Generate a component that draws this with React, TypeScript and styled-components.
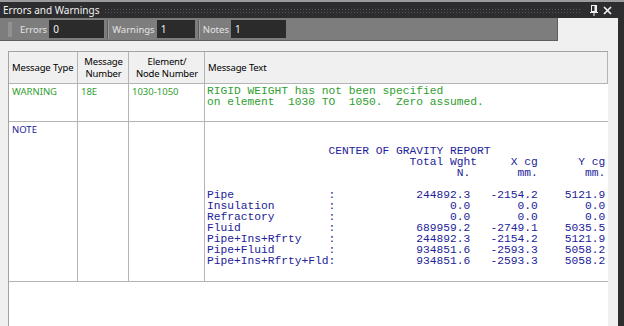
import React from "react";
import styled, { createGlobalStyle } from "styled-components";

const GlobalStyle = createGlobalStyle`
  html, body { margin: 0; padding: 0; background: #f0f0f0; }
  body { font-family: "Noto Sans", "Liberation Sans", sans-serif; }
  #root { width: 624px; height: 326px; }
`;

const Window = styled.div`
  width: 624px;
  height: 326px;
  display: flex;
  flex-direction: column;
  overflow: hidden;
  background: #2d2d30;
`;

const TopStrip = styled.div`
  height: 2px;
  flex: none;
  background: #9b9b9b;
`;

const TitleBar = styled.div`
  height: 16px;
  flex: none;
  display: flex;
  align-items: center;
  background: #2d2d30;
  color: #f1f1f1;
  padding: 0 12px 0 3px;
  font-size: 10px;
`;

const TitleText = styled.span`
  white-space: nowrap;
  line-height: 16px;
`;

const Dots = styled.div`
  flex: 1;
  height: 5px;
  margin: 0 5px 0 5px;
  background-image: radial-gradient(circle, #56565a 0.7px, transparent 0.9px);
  background-size: 3px 3px;
`;

const TitleButton = styled.span`
  display: flex;
  align-items: center;
  justify-content: center;
  width: 9px;
  height: 12px;
  margin-left: 4px;
`;

const Body = styled.div`
  flex: 1;
  display: flex;
  min-height: 0;
`;

const Main = styled.div`
  flex: 1;
  display: flex;
  flex-direction: column;
  background: #f0f0f0;
  min-width: 0;
`;

const RightEdge = styled.div`
  width: 6px;
  flex: none;
  background: #2d2d30;
`;

const Toolbar = styled.div`
  width: 558px;
  height: 23px;
  flex: none;
  box-sizing: border-box;
  background: #7d7d7d;
  border-right: 1px solid #5e5e5e;
  border-bottom: 1px solid #5e5e5e;
  display: flex;
  align-items: center;
  padding-left: 8px;
`;

const Grip = styled.div`
  width: 4px;
  height: 15px;
  background-image: radial-gradient(circle, #a9a9a9 0.6px, transparent 0.8px);
  background-size: 2px 2px;
  margin-right: 8px;
`;

const Group = styled.div`
  display: flex;
  align-items: center;
  gap: 2px;
`;

const Label = styled.span`
  font-size: 9.5px;
  color: #e4e4e4;
  white-space: nowrap;
`;

const Count = styled.div<{ $w: number }>`
  width: ${(p) => p.$w}px;
  height: 18px;
  box-sizing: border-box;
  background: #2b2b2c;
  color: #f1f1f1;
  font-size: 10px;
  padding-left: 4px;
  display: flex;
  align-items: center;
`;

const Sep = styled.div`
  width: 1px;
  height: 19px;
  background: #5a5a5a;
  border-right: 1px solid #9c9c9c;
  margin: 0 3px 0 3px;
`;

const Content = styled.div`
  flex: 1;
  display: flex;
  flex-direction: column;
  padding: 10px 10px 0 8px;
  min-height: 0;
`;

const Table = styled.div`
  flex: 1;
  display: flex;
  flex-direction: column;
  background: #ffffff;
  border-top: 1px solid #a3a3a3;
  border-left: 1px solid #a3a3a3;
  overflow: hidden;
`;

const Row = styled.div<{ $h: number }>`
  display: grid;
  grid-template-columns: 69px 51px 76px 1fr;
  height: ${(p) => p.$h}px;
  flex: none;
`;

const HeadCell = styled.div<{ $center?: boolean }>`
  box-sizing: border-box;
  background: #f0f0f0;
  border-right: 1px solid #b4b4b4;
  border-bottom: 1px solid #b4b4b4;
  display: flex;
  align-items: center;
  justify-content: ${(p) => (p.$center ? "center" : "flex-start")};
  text-align: ${(p) => (p.$center ? "center" : "left")};
  padding: 0 2px 0 3px;
  font-size: 9.5px;
  letter-spacing: -0.15px;
  line-height: 12px;
  white-space: nowrap;
  color: #000;
`;

const Cell = styled.div<{ $color: string }>`
  box-sizing: border-box;
  border-right: 1px solid #b4b4b4;
  border-bottom: 1px solid #b4b4b4;
  padding: 2px 3px;
  font-size: 9.5px;
  line-height: 11px;
  color: ${(p) => p.$color};
  overflow: hidden;
`;

const TextCell = styled.div<{ $color: string }>`
  box-sizing: border-box;
  border-bottom: 1px solid #b4b4b4;
  padding: 2px 2px;
  overflow: hidden;
  color: ${(p) => p.$color};
`;

const Mono = styled.pre`
  margin: 0;
  font-family: "Liberation Mono", "Courier New", monospace;
  font-size: 11.25px;
  line-height: 11px;
  white-space: pre;
`;

const Filler = styled.div`
  flex: 1;
  background: #ffffff;
`;

const GREEN = "#2f9e2f";
const BLUE = "#22229a";

const sp = (n: number) => " ".repeat(n);
const dataLine = (label: string, w: string, x: string, y: string) =>
  label.padEnd(18) + ":" + w.padStart(20) + x.padStart(10) + y.padStart(10);

const warningText = [
  "RIGID WEIGHT has not been specified",
  "on element  1030 TO  1050.  Zero assumed.",
  "",
].join("\n");

const report = [
  "",
  "",
  sp(18) + "CENTER OF GRAVITY REPORT",
  sp(30) + "Total Wght" + sp(5) + "X cg" + sp(6) + "Y cg",
  sp(37) + "N." + sp(7) + "mm." + sp(7) + "mm.",
  "",
  dataLine("Pipe", "244892.3", "-2154.2", "5121.9"),
  dataLine("Insulation", "0.0", "0.0", "0.0"),
  dataLine("Refractory", "0.0", "0.0", "0.0"),
  dataLine("Fluid", "689959.2", "-2749.1", "5035.5"),
  dataLine("Pipe+Ins+Rfrty", "244892.3", "-2154.2", "5121.9"),
  dataLine("Pipe+Fluid", "934851.6", "-2593.3", "5058.2"),
  dataLine("Pipe+Ins+Rfrty+Fld", "934851.6", "-2593.3", "5058.2"),
  "",
].join("\n");

const PinIcon = () => (
  <svg width="9" height="11" viewBox="0 0 9 11">
    <rect x="1.5" y="0.5" width="5" height="6" fill="none" stroke="#f1f1f1" />
    <rect x="4.5" y="0.5" width="2" height="6" fill="#f1f1f1" />
    <path d="M0 7.5 H8" stroke="#f1f1f1" />
    <path d="M4 8 V11" stroke="#f1f1f1" />
  </svg>
);

const CloseIcon = () => (
  <svg width="9" height="9" viewBox="0 0 9 9">
    <path d="M1 1 L8 8 M8 1 L1 8" stroke="#f1f1f1" strokeWidth="1.7" />
  </svg>
);

export default function App() {
  return (
    <>
      <GlobalStyle />
      <Window>
        <TopStrip />
        <TitleBar>
          <TitleText>Errors and Warnings</TitleText>
          <Dots />
          <TitleButton>
            <PinIcon />
          </TitleButton>
          <TitleButton>
            <CloseIcon />
          </TitleButton>
        </TitleBar>
        <Body>
          <Main>
            <Toolbar>
              <Grip />
              <Group>
                <Label>Errors</Label>
                <Count $w={55}>0</Count>
              </Group>
              <Sep />
              <Group>
                <Label>Warnings</Label>
                <Count $w={38}>1</Count>
              </Group>
              <Sep />
              <Group>
                <Label>Notes</Label>
                <Count $w={55}>1</Count>
              </Group>
            </Toolbar>
            <Content>
              <Table>
                <Row $h={32}>
                  <HeadCell>Message Type</HeadCell>
                  <HeadCell $center>
                    Message
                    <br />
                    Number
                  </HeadCell>
                  <HeadCell $center>
                    Element/
                    <br />
                    Node Number
                  </HeadCell>
                  <HeadCell>Message Text</HeadCell>
                </Row>
                <Row $h={38}>
                  <Cell $color={GREEN}>WARNING</Cell>
                  <Cell $color={GREEN}>18E</Cell>
                  <Cell $color={GREEN}>1030-1050</Cell>
                  <TextCell $color={GREEN}>
                    <Mono>{warningText}</Mono>
                  </TextCell>
                </Row>
                <Row $h={160}>
                  <Cell $color={BLUE}>NOTE</Cell>
                  <Cell $color={BLUE}></Cell>
                  <Cell $color={BLUE}></Cell>
                  <TextCell $color={BLUE}>
                    <Mono>{report}</Mono>
                  </TextCell>
                </Row>
                <Filler />
              </Table>
            </Content>
          </Main>
          <RightEdge />
        </Body>
      </Window>
    </>
  );
}
